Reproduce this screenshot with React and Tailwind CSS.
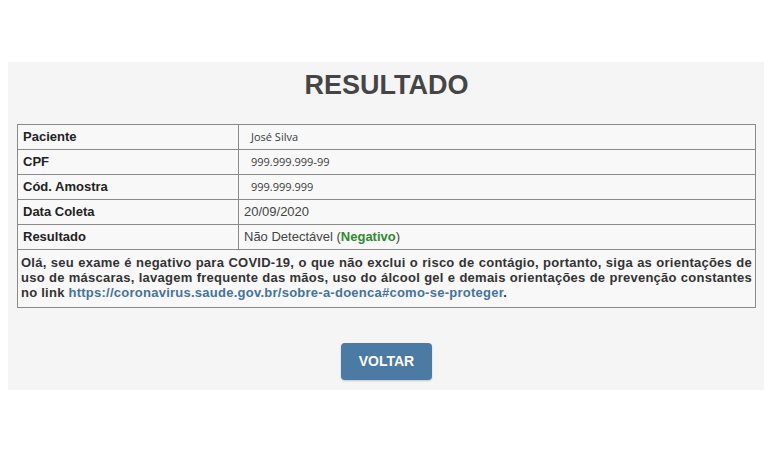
import React from "react";

export default function App() {
  const rows = [
    { label: "Paciente", value: "José Silva", alt: true },
    { label: "CPF", value: "999.999.999-99", alt: true },
    { label: "Cód. Amostra", value: "999.999.999", alt: true },
    { label: "Data Coleta", value: "20/09/2020" },
  ];
  return (
    <div className="w-[768px] h-[461px] bg-white pt-[62px] font-['Liberation_Sans',Arial,sans-serif]">
      <div className="ml-[8px] w-[756px] bg-[#f5f5f5] pt-[7px] pb-[10px] pl-[9px] pr-[8px]">
        <h1 className="text-center text-[27px] leading-[32px] font-bold text-[#454545]">RESULTADO</h1>
        <table className="mt-[23px] w-[739px] border-collapse border border-[#6e6e6e] text-[13px] bg-[#f8f8f8]">
          <tbody>
            {rows.map((r) => (
              <tr key={r.label}>
                <td className="w-[221px] h-[25px] border border-[#8a8a8a] px-[5px] py-0 font-bold text-[#222] leading-[16px]">{r.label}</td>
                <td className="h-[25px] border border-[#8a8a8a] py-0 leading-[16px]">
                  {r.alt ? (
                    <span className="pl-[12px] text-[11px] text-[#3a3a3a] font-['Open_Sans',sans-serif]">{r.value}</span>
                  ) : (
                    <span className="pl-[5px] text-[#444]">{r.value}</span>
                  )}
                </td>
              </tr>
            ))}
            <tr>
              <td className="h-[25px] border border-[#8a8a8a] px-[5px] py-0 font-bold text-[#222] leading-[16px]">Resultado</td>
              <td className="h-[25px] border border-[#8a8a8a] pl-[5px] py-0 text-[#444] leading-[16px]">
                Não Detectável (<span className="font-bold text-[#2e8b2e]">Negativo</span>)
              </td>
            </tr>
            <tr>
              <td colSpan={2} className="border border-[#8a8a8a] px-[3px] pt-[5px] pb-[7px] font-bold text-[#333] leading-[15px] tracking-[0.25px]">
                <span className="block text-justify [text-align-last:justify]">Olá, seu exame é negativo para COVID-19, o que não exclui o risco de contágio, portanto, siga as orientações de</span>
                <span className="block text-justify [text-align-last:justify]">uso de máscaras, lavagem frequente das mãos, uso do álcool gel e demais orientações de prevenção constantes</span>
                <span className="block">
                  no link <a className="text-[#44739f]">https://coronavirus.saude.gov.br/sobre-a-doenca#como-se-proteger</a>.
                </span>
              </td>
            </tr>
          </tbody>
        </table>
        <div className="mt-[35px] flex justify-center">
          <button className="w-[91px] h-[37px] rounded-[4px] bg-[#4b7aa5] text-white font-bold text-[14px] shadow-[0_1px_2px_rgba(0,0,0,0.2)]">VOLTAR</button>
        </div>
      </div>
    </div>
  );
}
